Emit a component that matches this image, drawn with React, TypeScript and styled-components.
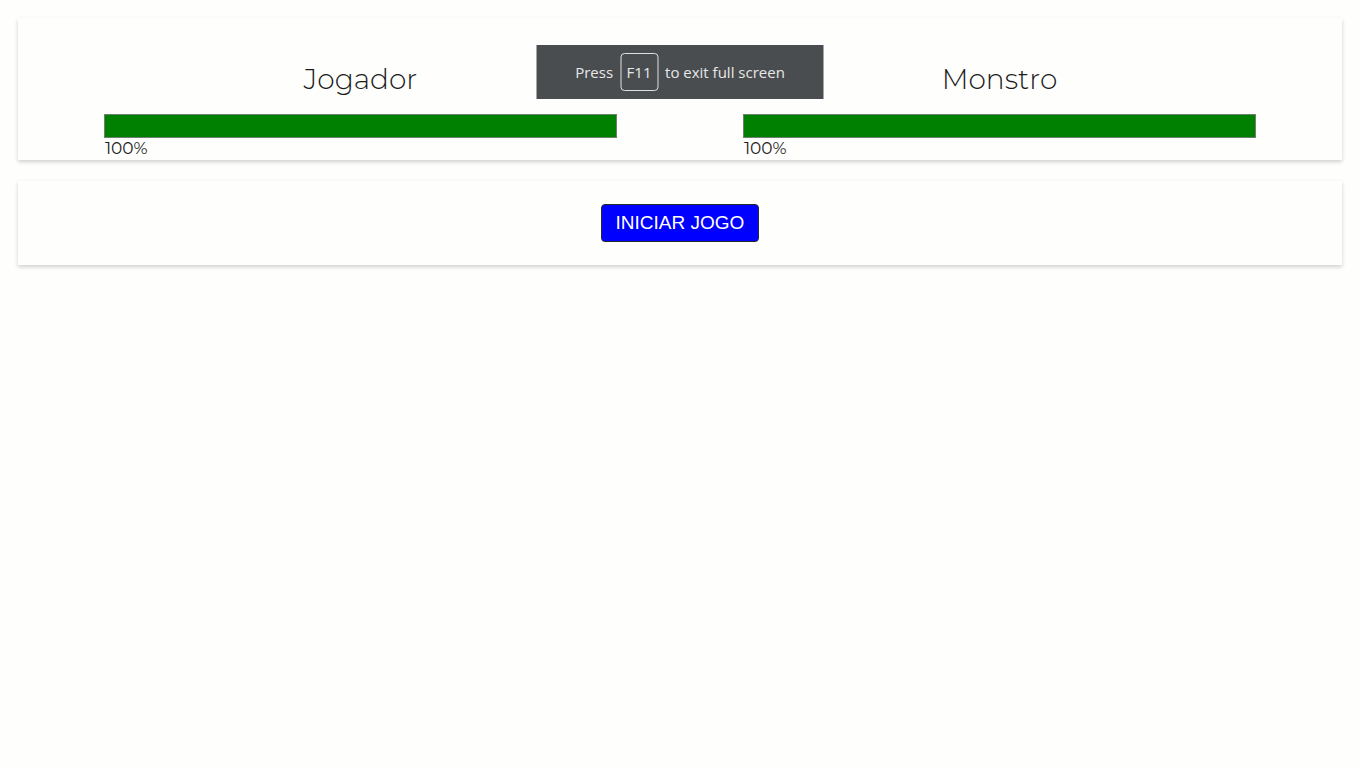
import React from "react";
import styled, { createGlobalStyle } from "styled-components";

const Global = createGlobalStyle`
  html, body { background: #fefefc; }
  body { margin: 8px; font-family: "Montserrat", "DejaVu Sans", sans-serif; color: #222; }
`;

const Page = styled.div`
  display: flex;
  flex-direction: column;
  gap: 21px;
  padding: 10px;
  position: relative;
`;

const Card = styled.section<{ $pad: string }>`
  background: #fefefc;
  box-shadow: 0 2px 4px #d0d0d0;
  padding: ${(p) => p.$pad};
`;

const Columns = styled.div`
  display: grid;
  grid-template-columns: 1fr 1fr;
`;

const Column = styled.div`
  display: flex;
  flex-direction: column;
  align-items: center;
`;

const Title = styled.h2`
  margin: 0 0 18px;
  font-family: "Montserrat", "DejaVu Sans", sans-serif;
  font-weight: 300;
  font-size: 28px;
  line-height: 34px;
  color: #1c1c1c;
`;

const Bar = styled.div`
  width: 80%;
  height: 22px;
  border: 1px solid #6f7f6f;
  background: #fff;
`;

const Fill = styled.div`
  height: 100%;
  background: #008000;
`;

const Label = styled.div`
  width: 80%;
  font-family: "Montserrat", "DejaVu Sans", sans-serif;
  font-size: 17px;
  line-height: 21px;
  color: #1c1c1c;
`;

const Center = styled.div`
  display: flex;
  justify-content: center;
`;

const StartButton = styled.button`
  height: 38px;
  padding: 0 14px;
  background: #0000ff;
  color: #fff;
  border: 1px solid #2a2a2a;
  border-radius: 4px;
  font-family: "Liberation Sans", Arial, sans-serif;
  font-size: 19px;
  cursor: pointer;
`;

const Toast = styled.div`
  position: absolute;
  top: 37px;
  left: 50%;
  transform: translateX(-50%);
  width: 287px;
  height: 54px;
  box-sizing: border-box;
  background: #4a4d4f;
  color: #e8e8e8;
  display: flex;
  align-items: center;
  justify-content: center;
  gap: 7px;
  font-family: "Open Sans", "Noto Sans", sans-serif;
  font-size: 15px;
`;

const Key = styled.span`
  display: inline-flex;
  align-items: center;
  justify-content: center;
  width: 38px;
  height: 38px;
  box-sizing: border-box;
  border: 1px solid #e0e0e0;
  border-radius: 4px;
`;

const players = [
  { name: "Jogador", health: 100 },
  { name: "Monstro", health: 100 },
];

export default function App() {
  return (
    <>
      <Global />
      <Page>
        <Card $pad="44px 23px 1px">
          <Columns>
            {players.map((p) => (
              <Column key={p.name}>
                <Title>{p.name}</Title>
                <Bar>
                  <Fill style={{ width: `${p.health}%` }} />
                </Bar>
                <Label>{p.health}%</Label>
              </Column>
            ))}
          </Columns>
        </Card>
        <Card $pad="23px">
          <Center>
            <StartButton>INICIAR JOGO</StartButton>
          </Center>
        </Card>
        <Toast>
          Press <Key>F11</Key> to exit full screen
        </Toast>
      </Page>
    </>
  );
}
